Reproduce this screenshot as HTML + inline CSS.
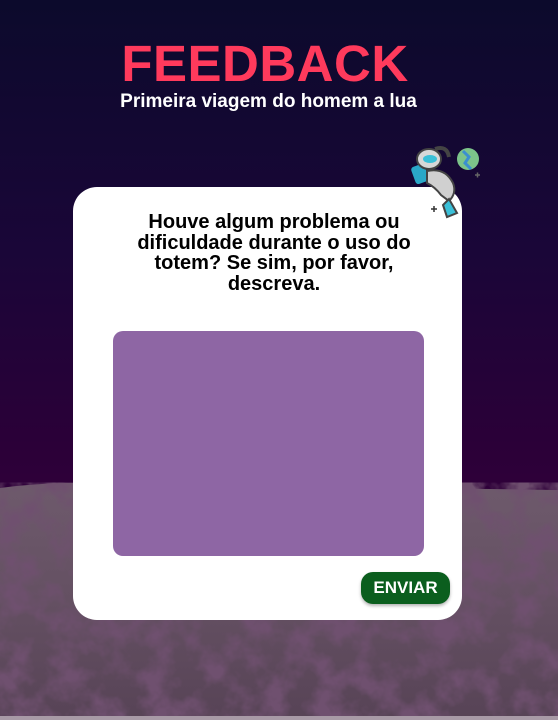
<!DOCTYPE html>
<html><head><meta charset="utf-8"><style>
html,body{margin:0;padding:0}
body{width:558px;height:720px;overflow:hidden;position:relative;font-family:"Liberation Sans",sans-serif;
background:linear-gradient(180deg,#0c0a2c 0%,#1a0638 35%,#2b0038 62%,#30003a 70%);}
.moon{position:absolute;left:0;top:470px;width:558px;height:250px;}
h1{position:absolute;left:0;width:530px;top:34px;margin:0;text-align:center;color:#ff3a5c;font-size:51px;font-weight:bold;letter-spacing:0.5px}
.sub{position:absolute;left:0;width:537px;top:91px;text-align:center;color:#fff;font-size:19px;font-weight:bold}
.card{position:absolute;left:73px;top:187px;width:389px;height:433px;background:#fff;border-radius:24px}
.q{position:absolute;left:0;width:402px;top:25px;text-align:center;font-size:20px;line-height:20.7px;font-weight:bold;color:#000}
.ta{position:absolute;left:40px;top:144px;width:311px;height:225px;background:#8e66a4;border-radius:10px}
.btn{position:absolute;left:288px;top:385px;width:89px;height:32px;background:#0b5e1e;border-radius:12px;color:#fff;font-weight:bold;font-size:17px;line-height:32px;text-align:center;box-shadow:0 2px 3px rgba(0,0,0,.3)}
</style></head><body>
<svg class="moon" width="558" height="250" viewBox="0 0 558 250">
<defs>
<filter id="n" x="0" y="0" width="100%" height="100%">
<feTurbulence type="fractalNoise" baseFrequency="0.035" numOctaves="4" seed="7"/>
<feColorMatrix type="matrix" values="0 0 0 0 0.16  0 0 0 0 0.08  0 0 0 0 0.16  3 0 0 0 -1.2"/>
</filter>
<linearGradient id="g" x1="0" y1="0" x2="0" y2="1">
<stop offset="0" stop-color="#6e5a6c"/><stop offset="0.5" stop-color="#645062"/><stop offset="1" stop-color="#574356"/></linearGradient>
</defs>
<path d="M0 18 Q60 10 140 14 L558 20 L558 250 L0 250Z" fill="url(#g)"/>
<path d="M0 18 Q60 10 140 14 L558 20 L558 250 L0 250Z" fill="#2e1a30" filter="url(#n)"/>
<rect x="0" y="246" width="558" height="4" fill="#a89aa6"/>
</svg>
<h1>FEEDBACK</h1>
<div class="sub">Primeira viagem do homem a lua</div>
<div class="card">
<div class="q">Houve algum problema ou<br>dificuldade durante o uso do<br>totem? Se sim, por favor,<br>descreva.</div>
<div class="ta"></div>
<div class="btn">ENVIAR</div>
</div>
<svg style="position:absolute;left:405px;top:143px" width="85" height="80" viewBox="0 0 85 80">
<circle cx="63" cy="16" r="11" fill="#7cc48a"/><path d="M58 8 L64 14 L60 20 L66 26" stroke="#3a8fd0" stroke-width="3" fill="none"/>
<rect x="8" y="22" width="14" height="18" rx="3" fill="#2aa8c8" transform="rotate(-20 15 31)"/>
<ellipse cx="24" cy="16" rx="12" ry="10" fill="#d8d8d8" stroke="#444" stroke-width="2"/>
<ellipse cx="25" cy="16" rx="7" ry="4" fill="#3bc0d8"/>
<path d="M22 28 Q40 24 48 40 Q52 50 44 58 L36 52 Q30 44 22 40Z" fill="#d0d0d0" stroke="#444" stroke-width="2"/>
<path d="M44 56 L52 70 L42 74 L38 62Z" fill="#3bc0d8" stroke="#444" stroke-width="2"/>
<path d="M30 6 Q42 2 44 14" stroke="#444" stroke-width="4" fill="none"/>
<path d="M26 66 h6 M29 63 v6" stroke="#333" stroke-width="1.5"/>
<path d="M70 32 h5 M72.5 29.5 v5" stroke="#666" stroke-width="1.5"/>
</svg>
</body></html>
